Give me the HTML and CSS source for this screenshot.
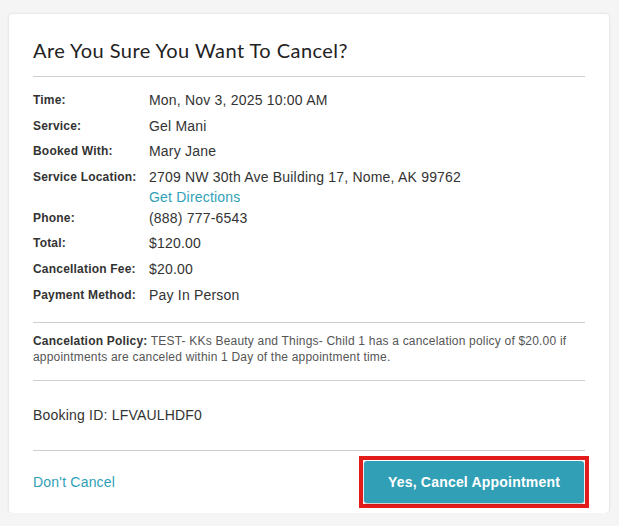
FILE: index.html
```html
<!DOCTYPE html>
<html>
<head>
<meta charset="utf-8">
<link rel="stylesheet" href="styles.css">
</head>
<body>
<div class="card">
  <h1 class="title">Are You Sure You Want To Cancel?</h1>
  <div class="rule"></div>
  <div class="details">
    <div class="label">Time:</div><div class="value">Mon, Nov 3, 2025 10:00 AM</div>
    <div class="label">Service:</div><div class="value">Gel Mani</div>
    <div class="label">Booked With:</div><div class="value">Mary Jane</div>
    <div class="label">Service Location:</div><div class="value">2709 NW 30th Ave Building 17, Nome, AK 99762<a class="directions" href="#">Get Directions</a></div>
    <div class="label">Phone:</div><div class="value">(888) 777-6543</div>
    <div class="label">Total:</div><div class="value">$120.00</div>
    <div class="label">Cancellation Fee:</div><div class="value">$20.00</div>
    <div class="label">Payment Method:</div><div class="value">Pay In Person</div>
  </div>
  <div class="rule rule-policy"></div>
  <p class="policy"><b>Cancelation Policy:</b> TEST- KKs Beauty and Things- Child 1 has a cancelation policy of $20.00 if appointments are canceled within 1 Day of the appointment time.</p>
  <div class="rule rule-booking"></div>
  <p class="booking">Booking ID: LFVAULHDF0</p>
  <div class="rule rule-footer"></div>
  <div class="footer">
    <a class="dont" href="#">Don't Cancel</a>
    <span class="highlight"><button class="confirm">Yes, Cancel Appointment</button></span>
  </div>
</div>
</body>
</html>
```
FILE: styles.css
```css
html, body {
  margin: 0;
  padding: 0;
  background: #f5f5f5;
}
body {
  font-family: "Liberation Sans", Arial, sans-serif;
  color: #333;
  letter-spacing: 0.2px;
}
.card {
  box-sizing: border-box;
  width: 600px;
  height: 499px;
  margin: 14px 0 0 9px;
  padding: 24px 24px 0 24px;
  background: #fff;
  border-radius: 4px;
  box-shadow: 0 0 3px rgba(0,0,0,0.12);
}
.title {
  margin: 0;
  font-family: "Lato", "Liberation Sans", sans-serif;
  font-weight: 400;
  font-size: 20px;
  line-height: 24px;
  color: #222;
  letter-spacing: 0.45px;
}
.rule {
  height: 1px;
  background: #cfcfcf;
  margin-top: 14px;
}
.details {
  display: grid;
  grid-template-columns: 116px 1fr;
  row-gap: 5.6px;
  margin-top: 13px;
}
.label {
  font-size: 12px;
  font-weight: bold;
  line-height: 20px;
  color: #333;
}
.value {
  font-size: 14px;
  line-height: 20px;
  color: #333;
}
.directions {
  display: block;
  color: #2f9fb7;
  text-decoration: none;
  margin-bottom: -4.6px;
}
.rule-policy {
  margin-top: 17px;
}
.policy {
  margin: 10px 0 0 0;
  font-size: 12px;
  line-height: 16px;
  color: #555;
}
.policy b {
  color: #333;
}
.rule-booking {
  margin-top: 15px;
}
.booking {
  margin: 24px 0 0 0;
  font-size: 14px;
  line-height: 20px;
  color: #333;
}
.rule-footer {
  margin-top: 25px;
}
.footer {
  display: flex;
  justify-content: space-between;
  align-items: center;
  margin-top: 5px;
}
.dont {
  color: #2f9fb7;
  text-decoration: none;
  font-size: 14px;
  line-height: 20px;
}
.highlight {
  display: block;
  border: 4px solid #e21b1b;
  padding: 1px;
  margin-right: -4px;
  line-height: 0;
}
.confirm {
  width: 220px;
  height: 42px;
  border: none;
  border-radius: 3px;
  background: #31a0b7;
  color: #fff;
  font-family: "Liberation Sans", Arial, sans-serif;
  font-weight: bold;
  font-size: 14px;
  letter-spacing: 0.2px;
  box-shadow: 0 1px 2px rgba(0,0,0,0.25);
}
```
